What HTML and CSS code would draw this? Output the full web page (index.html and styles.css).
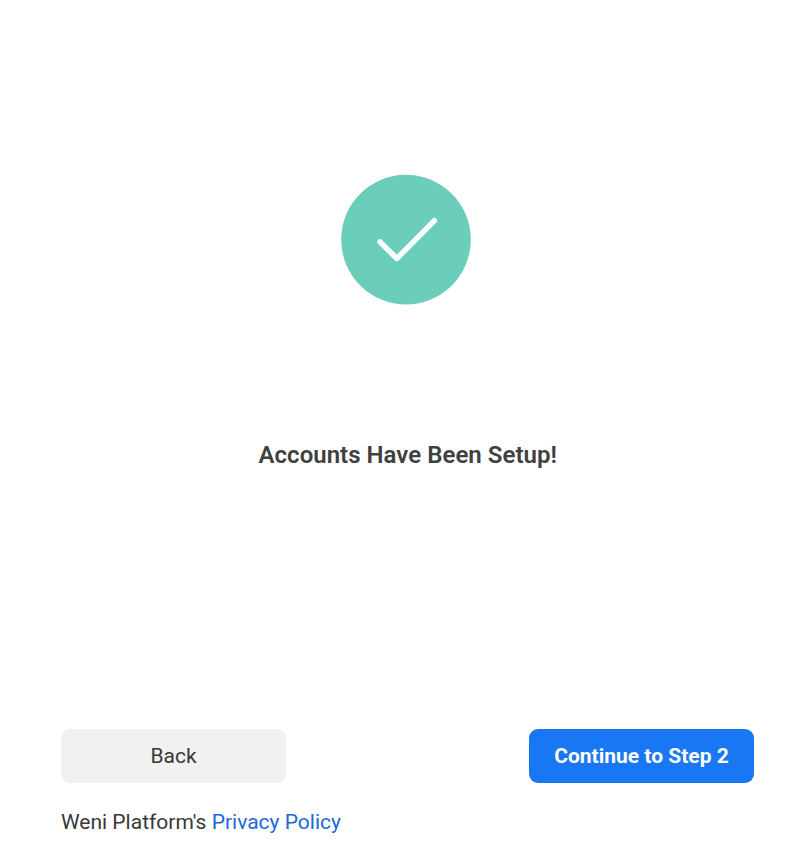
FILE: index.html
```html
<!DOCTYPE html>
<html lang="en">
<head>
<meta charset="utf-8">
<title>Accounts Have Been Setup!</title>
<link rel="stylesheet" href="styles.css">
</head>
<body>
<main class="page">
  <svg class="badge" viewBox="0 0 130 130" aria-hidden="true">
    <circle cx="65" cy="64.6" r="64.8" fill="#6bcebb"/>
    <path d="M39 66.9 55.8 83.5 93.4 45.7" fill="none" stroke="#fff" stroke-width="5.4" stroke-linecap="round" stroke-linejoin="round"/>
  </svg>
  <h1 class="title">Accounts Have Been Setup!</h1>
  <div class="actions">
    <button class="button back">Back</button>
    <button class="button next">Continue to Step 2</button>
  </div>
  <p class="policy">Weni Platform's <a href="#">Privacy Policy</a></p>
</main>
</body>
</html>
```
FILE: styles.css
```css
body {
  margin: 0;
  background: #fff;
  color: #383838;
  font-family: Roboto, sans-serif;
}

.page {
  box-sizing: border-box;
  height: 855px;
  padding: 175px 50px 0 61px;
  display: flex;
  flex-direction: column;
  overflow: hidden;
}

.badge {
  width: 130px;
  height: 130px;
  margin-left: 280px;
  overflow: visible;
}

.title {
  margin: 134px 0 0 197.5px;
  font-size: 24px;
  line-height: 32px;
  font-weight: 600;
  letter-spacing: 0.03px;
  color: #404040;
  white-space: nowrap;
}

.actions {
  display: flex;
  justify-content: space-between;
  margin-top: 258px;
}

.button {
  width: 225px;
  height: 54px;
  padding: 0;
  border: 0;
  border-radius: 9px;
  font-family: inherit;
  font-size: 21px;
}

.back {
  background: #f1f1f1;
  color: #383838;
}

.next {
  background: #1977f3;
  color: #fff;
  font-weight: 700;
}

.policy {
  margin: 25px 0 0;
  font-size: 21px;
  line-height: 28px;
}

.policy a {
  color: #1b69da;
  text-decoration: none;
}
```
